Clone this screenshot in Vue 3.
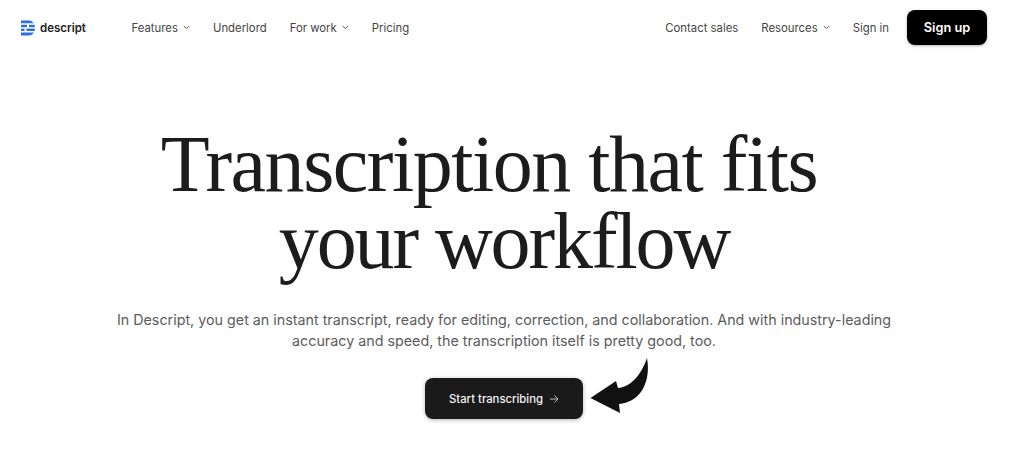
<script setup>
const left = [
  { label: 'Features', caret: true },
  { label: 'Underlord', caret: false },
  { label: 'For work', caret: true },
  { label: 'Pricing', caret: false },
]
const right = [
  { label: 'Contact sales', caret: false },
  { label: 'Resources', caret: true },
  { label: 'Sign in', caret: false },
]
</script>

<template>
  <div class="page">
    <header class="nav">
      <a class="logo">
        <svg class="mark" width="14" height="16" viewBox="0 0 14 16">
          <g fill="#2b6fe8">
            <path d="M0 0.500H8.500C10 0.500 11.500 1.300 12.500 3.300H0z" />
            <rect x="0" y="4.800" width="6" height="2.400" />
            <rect x="8" y="4.800" width="5.800" height="2.400" />
            <rect x="0" y="8.600" width="3.500" height="2.400" />
            <rect x="5.500" y="8.600" width="8.300" height="2.400" />
            <path d="M0 12.500H12.800C11.700 14.500 10 15.500 8.500 15.500H0z" />
          </g>
        </svg>
        <span>descript</span>
      </a>
      <nav class="links primary">
        <a v-for="l in left" :key="l.label" class="link">
          {{ l.label }}
          <svg v-if="l.caret" width="7" height="5" viewBox="0 0 7 5"><path d="M0.800 1l2.700 2.700L6.200 1" fill="none" stroke="#555" stroke-width="1" /></svg>
        </a>
      </nav>
      <nav class="links secondary">
        <a v-for="l in right" :key="l.label" class="link">
          {{ l.label }}
          <svg v-if="l.caret" width="7" height="5" viewBox="0 0 7 5"><path d="M0.800 1l2.700 2.700L6.200 1" fill="none" stroke="#555" stroke-width="1" /></svg>
        </a>
        <button class="signup">Sign up</button>
      </nav>
    </header>

    <main class="hero">
      <h1><span class="line-one">Transcription that fits</span><span class="line-two">your workflow</span></h1>
      <p>In Descript, you get an instant transcript, ready for editing, correction, and collaboration. And with industry-leading<br />accuracy and speed, the transcription itself is pretty good, too.</p>
      <div class="cta-wrap">
        <button class="cta">
          Start transcribing
          <svg width="10" height="10" viewBox="0 0 10 10"><path d="M1 5h8M5.500 1.500L9 5 5.500 8.500" fill="none" stroke="#bbb" stroke-width="1" /></svg>
        </button>
        <svg class="arrow" width="60" height="58" viewBox="0 0 60 58">
          <path d="M0.500 42L26 25 28 32C41 31 51 19 57 2 61 24 52 46 29 48L30 57z" fill="#111" />
        </svg>
      </div>
    </main>
  </div>
</template>

<style>
html, body { margin: 0; background: #fff; }
</style>

<style scoped>
.page {
  width: 1024px;
  height: 452px;
  overflow: hidden;
  background: #fff;
  font-family: Inter, "Liberation Sans", sans-serif;
  color: #333;
}
.nav {
  display: flex;
  align-items: center;
  height: 55px;
  padding: 0 37px 0 21px;
  box-sizing: border-box;
}
.logo {
  display: flex;
  align-items: center;
  gap: 5px;
  font-size: 11.500px;
  font-weight: 600;
  color: #222;
  width: 110px;
}
.mark { flex: none; }
.links {
  display: flex;
  align-items: center;
  gap: 23px;
  font-size: 11.350px;
}
.secondary { margin-left: auto; }
.link {
  display: flex;
  align-items: center;
  gap: 5px;
  color: #444;
}
.primary .link:first-child { margin-left: 0.500px; }
.signup {
  width: 80px;
  height: 35px;
  margin-left: -5px;
  border: 0;
  border-radius: 8px;
  background: #000;
  color: #fff;
  font: 600 12.800px Inter, "Liberation Sans", sans-serif;
  box-shadow: 0 1px 3px rgba(0, 0, 0, 0.3);
}
.hero {
  display: flex;
  flex-direction: column;
  align-items: center;
  width: 1008px;
}
h1 {
  margin: 71px 0 0;
  width: 100%;
  text-align: center;
  font-family: "Liberation Serif", serif;
  font-size: 80px;
  font-weight: 400;
  line-height: 77px;
  color: #1c1c1c;
}
.line-one {
  display: block;
  letter-spacing: -1.480px;
  padding-right: 30px;
}
.line-two {
  display: block;
  letter-spacing: -2.100px;
}
p {
  margin: 29px 0 0;
  text-align: center;
  font-size: 14.300px;
  line-height: 21px;
  color: #5c5c5c;
}
.cta-wrap {
  position: relative;
  margin-top: 27px;
}
.cta {
  display: flex;
  align-items: center;
  justify-content: center;
  gap: 6px;
  width: 158px;
  height: 41px;
  border: 0;
  border-radius: 8px;
  background: #1a1a1a;
  color: #f2f2f2;
  font: 500 11.300px Inter, "Liberation Sans", sans-serif;
  box-shadow: 0 1px 4px rgba(0, 0, 0, 0.3);
}
.arrow {
  position: absolute;
  left: 165px;
  top: -22px;
}
</style>
